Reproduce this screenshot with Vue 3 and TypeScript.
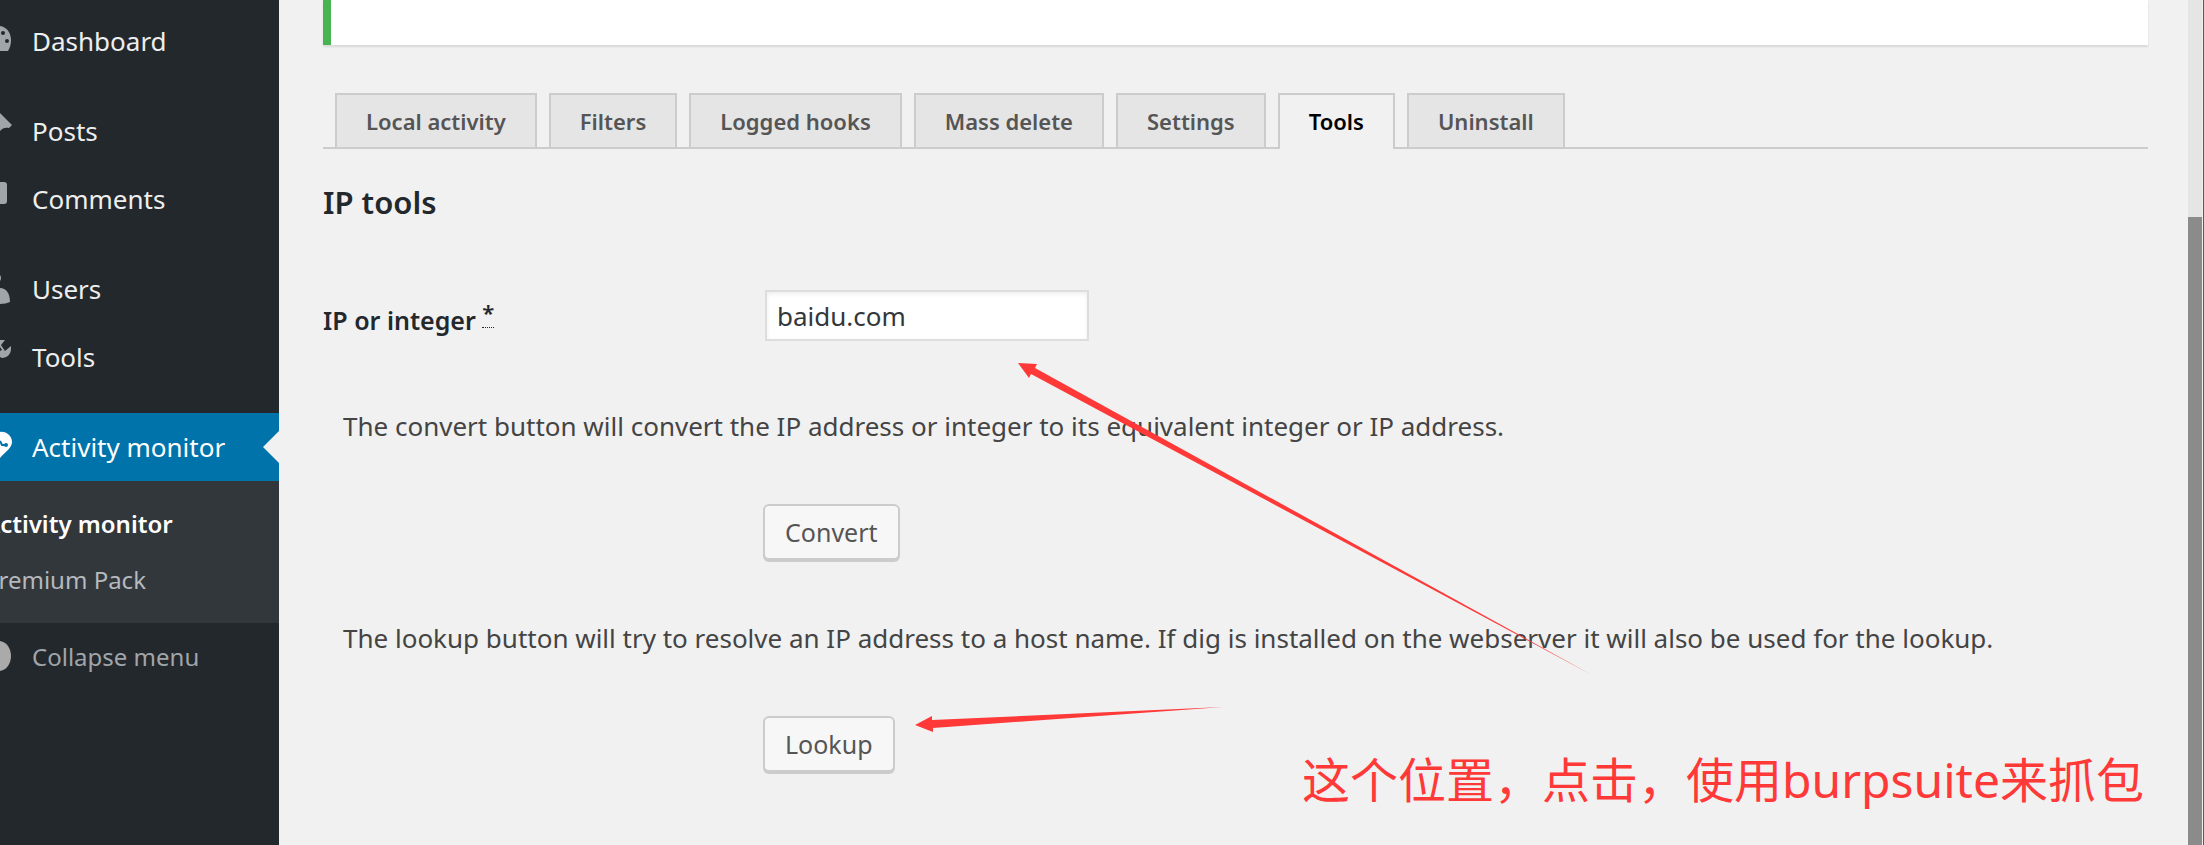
<script setup lang="ts">
import { ref } from 'vue'

interface MenuItem {
  label: string
  icon: string
}

const groups: MenuItem[][] = [
  [{ label: 'Dashboard', icon: 'dashboard' }],
  [
    { label: 'Posts', icon: 'pin' },
    { label: 'Comments', icon: 'comment' },
  ],
  [
    { label: 'Users', icon: 'user' },
    { label: 'Tools', icon: 'wrench' },
  ],
]

const tabs = ['Local activity', 'Filters', 'Logged hooks', 'Mass delete', 'Settings', 'Tools', 'Uninstall']
const activeTab = ref('Tools')
const address = ref('baidu.com')
</script>

<template>
  <div class="admin">
    <nav class="sidebar" aria-label="Main menu">
      <ul v-for="(group, g) in groups" :key="g" class="group">
        <li v-for="item in group" :key="item.label">
          <a href="#" class="item">
            <svg class="icon" viewBox="0 0 12 40" aria-hidden="true">
              <path v-if="item.icon === 'dashboard'" fill-rule="evenodd" d="M0 5C7 6 11 12 11 19c0 4-1 8-3 11H0zM3 10a2 2 0 1 0 0 4a2 2 0 0 0 0-4zM7 18a2 2 0 1 0 0 4a2 2 0 0 0 0-4z" />
              <path v-else-if="item.icon === 'pin'" d="M0 2L12 14L9 17C6 16 2 17 0 20z" />
              <path v-else-if="item.icon === 'comment'" d="M0 3h4q3 0 3 3v16q0 3-3 3H0z" />
              <path v-else-if="item.icon === 'user'" d="M0 6q1 1 1 3t-1 3zM0 19c6 0 10 5 10 14Q6 35 0 35z" />
              <path v-else d="M0 3h5L1 8l4 6 6-5v3c0 5-4 9-9 9L0 20v-6L2 13 0 10z" />
            </svg>
            <span>{{ item.label }}</span>
          </a>
        </li>
      </ul>
      <a href="#" class="item current" aria-current="page">
        <svg class="icon" viewBox="0 0 12 40" aria-hidden="true">
          <path d="M0 5C6 4 12 9 12 15C12 21 6 24 0 31z" />
          <path class="pulse" d="M0 14L2 18H7" />
          <circle class="pulse-dot" cx="6" cy="18" r="2" />
        </svg>
        <span>Activity monitor</span>
      </a>
      <ul class="submenu">
        <li><a href="#" class="selected">Activity monitor</a></li>
        <li><a href="#">Premium Pack</a></li>
      </ul>
      <button type="button" class="item collapse">
        <svg class="icon" viewBox="0 0 12 40" aria-hidden="true">
          <path d="M0 5C7 6 11 13 11 20S7 34 0 35z" />
        </svg>
        <span>Collapse menu</span>
      </button>
    </nav>

    <main class="content">
      <div class="notice"></div>
      <nav class="tabs" aria-label="Sections">
        <a v-for="tab in tabs" :key="tab" href="#" class="tab" :class="{ active: tab === activeTab }" @click.prevent="activeTab = tab">{{ tab }}</a>
      </nav>
      <h2>IP tools</h2>
      <form class="form" @submit.prevent>
        <div class="row">
          <label for="address">IP or integer <sup><abbr>*</abbr></sup></label>
          <input id="address" v-model="address" type="text" />
        </div>
        <p>The convert button will convert the IP address or integer to its equivalent integer or IP address.</p>
        <button type="submit" class="button">Convert</button>
        <p>The lookup button will try to resolve an IP address to a host name. If dig is installed on the webserver it will also be used for the lookup.</p>
        <button type="submit" class="button">Lookup</button>
      </form>
    </main>

    <div class="scrollbar" aria-hidden="true"><div class="thumb"></div></div>

    <svg class="arrows" width="1600" height="800" viewBox="0 0 1600 800" aria-hidden="true">
      <path d="M1018 363L1037 364L1035 368L1592 675L1031 374L1029 378z" />
      <path d="M915 725L932 716V720L1223 707L933 728V732z" />
    </svg>
    <div class="note" lang="zh-CN">这个位置，点击，使用burpsuite来抓包</div>
  </div>
</template>

<style>
body {
  margin: 0;
  background: #f1f1f1;
}
</style>

<style scoped>
.admin {
  position: relative;
  display: flex;
  min-height: 100vh;
  overflow: hidden;
  font-family: "Noto Sans", "Noto Sans CJK SC", sans-serif;
  font-size: 26px;
  color: #444;
}
ul {
  list-style: none;
  margin: 0;
  padding: 0;
}
a {
  color: inherit;
  text-decoration: none;
}
.sidebar {
  flex: 0 0 279px;
  box-sizing: border-box;
  padding-top: 7px;
  background: #23282d;
  color: #eee;
  white-space: nowrap;
}
.group {
  margin-bottom: 22px;
}
.item {
  position: relative;
  display: flex;
  align-items: center;
  gap: 20px;
  width: 100%;
  height: 68px;
}
.icon {
  width: 12px;
  height: 40px;
  fill: #a0a5aa;
}
.current {
  background: #0073aa;
  color: #fff;
}
.current .icon {
  fill: #fff;
}
.current::after {
  content: "";
  position: absolute;
  right: 0;
  top: 18px;
  border: 16px solid transparent;
  border-right-color: #f1f1f1;
  border-left-width: 0;
}
.icon .pulse {
  fill: none;
  stroke: #0073aa;
  stroke-width: 2;
}
.icon .pulse-dot {
  fill: #0073aa;
}
.submenu {
  padding: 15px 0;
  background: #32373c;
  color: #b4b9be;
  font-size: 24px;
  line-height: 56px;
  overflow: hidden;
}
.submenu a {
  display: block;
  margin-left: -16px;
}
.submenu .selected {
  color: #fff;
  font-weight: 600;
}
.collapse {
  height: 66px;
  padding: 0;
  border: 0;
  background: none;
  color: #a0a5aa;
  font: inherit;
  font-size: 24px;
}
.collapse .icon {
  fill: #aaa;
}
.content {
  flex: 1;
  min-width: 0;
  padding: 0 40px 0 44px;
}
.notice {
  height: 45px;
  border-left: 8px solid #46b450;
  background: #fff;
  box-shadow: 0 2px 2px rgba(0, 0, 0, 0.1);
}
.tabs {
  display: flex;
  gap: 12px;
  margin-top: 48px;
  padding-left: 12px;
  border-bottom: 2px solid #ccc;
}
.tab {
  padding: 0 29px;
  border: 2px solid #ccc;
  border-bottom: 0;
  background: #e5e5e5;
  color: #555;
  font-size: 22px;
  font-weight: 600;
  line-height: 52px;
  white-space: nowrap;
}
.tab.active {
  margin-bottom: -2px;
  padding-bottom: 2px;
  background: #f1f1f1;
  color: #000;
}
h2 {
  margin: 31px 0 0;
  color: #23282d;
  font-size: 31px;
  font-weight: 600;
  line-height: 44px;
}
.form {
  display: grid;
  grid-template-columns: 440px 1fr;
  margin-top: 66px;
}
.row {
  display: contents;
}
label {
  padding-top: 10px;
  color: #23282d;
  font-size: 25px;
  font-weight: 600;
  line-height: 40px;
}
sup {
  font-size: 22px;
  line-height: 0;
}
abbr {
  border-bottom: 1px dotted #23282d;
}
input {
  box-sizing: border-box;
  width: 324px;
  height: 51px;
  margin-left: 2px;
  padding: 0 10px;
  border: 2px solid #ddd;
  background: #fff;
  box-shadow: inset 0 2px 4px rgba(0, 0, 0, 0.07);
  color: #32373c;
  font: inherit;
}
p {
  grid-column: 1 / -1;
  margin: 65px 0 58px;
  padding-left: 20px;
  line-height: 40px;
}
.button {
  grid-column: 2;
  justify-self: start;
  height: 56px;
  padding: 0 20px;
  border: 2px solid #ccc;
  border-radius: 6px;
  background: #f7f7f7;
  box-shadow: 0 2px 0 #ccc;
  color: #555;
  font: inherit;
  font-size: 25px;
}
.button + p {
  margin-top: 58px;
}
.scrollbar {
  box-sizing: border-box;
  width: 14px;
  margin-right: 1px;
  padding-top: 217px;
  background: #e5e5e5;
}
.thumb {
  height: 100%;
  background: #8b8b8b;
}
.admin::after {
  content: "";
  width: 1px;
  background: #5a5a5a;
}
.arrows {
  position: absolute;
  left: 0;
  top: 0;
  fill: #ff3838;
  pointer-events: none;
}
.note {
  position: absolute;
  right: 60px;
  top: 745px;
  color: #ff3838;
  font-size: 48px;
  line-height: 70px;
  white-space: nowrap;
}
</style>
